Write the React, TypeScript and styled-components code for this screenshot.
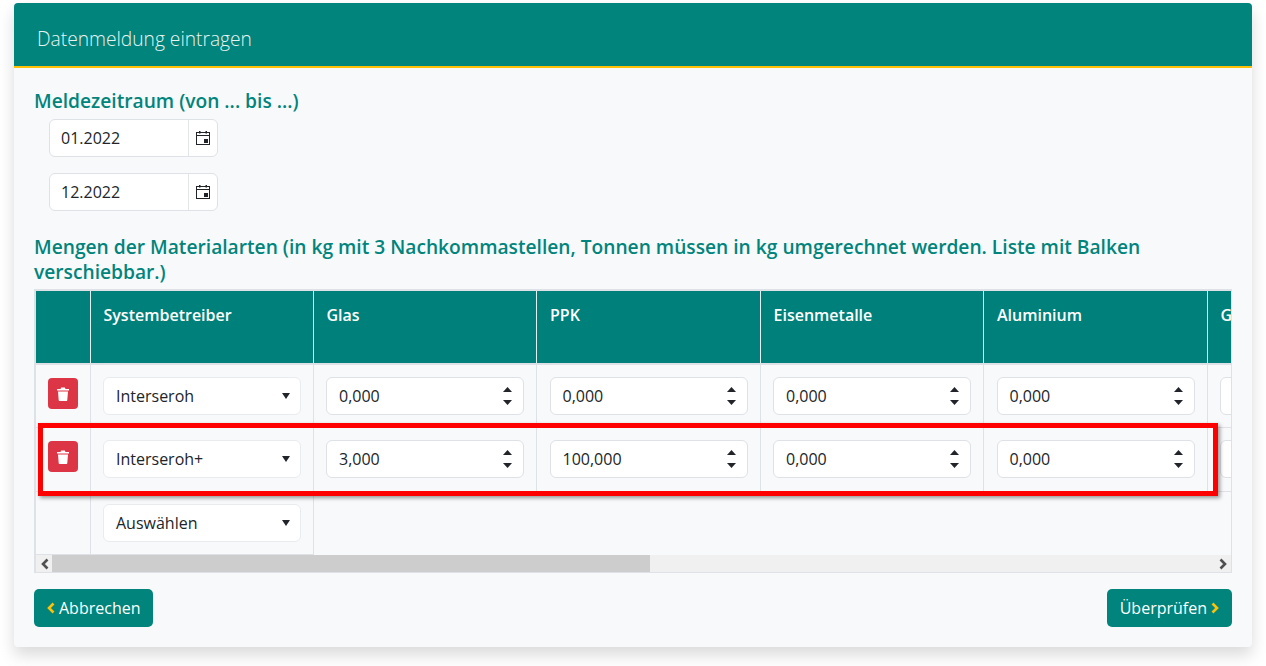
import styled, { createGlobalStyle } from "styled-components";

const columns = ["Glas", "PPK", "Eisenmetalle", "Aluminium", "Getränkekarton"];

const rows = [
  { betreiber: "Interseroh", values: ["0,000", "0,000", "0,000", "0,000", "0,000"] },
  { betreiber: "Interseroh+", values: ["3,000", "100,000", "0,000", "0,000", "0,000"] },
];

const CalendarIcon = () => (
  <svg width="16" height="16" viewBox="0 0 16 16" fill="none">
    <rect x="1.5" y="2.5" width="13" height="12" stroke="#212529" />
    <path d="M1.5 5.5h13" stroke="#212529" />
    <rect x="4" y="1" width="1.5" height="2.5" fill="#212529" />
    <rect x="10.5" y="1" width="1.5" height="2.5" fill="#212529" />
    <rect x="9" y="9" width="4" height="4" fill="#212529" />
  </svg>
);

const TrashIcon = () => (
  <svg width="12" height="14" viewBox="0 0 12 14" fill="#fff">
    <path d="M0 2h3.5L4.2.5h3.6L8.5 2H12v1.5H0z" />
    <path d="M1 4.5h10l-.7 8.5c0 .6-.5 1-1 1H2.7c-.5 0-1-.4-1-1z" />
  </svg>
);

const Chevron = ({ dir, color }: { dir: "left" | "right"; color: string }) => (
  <svg width="8" height="12" viewBox="0 0 8 12" fill="none">
    <path
      d={dir === "left" ? "M6.5 1.5L2 6l4.5 4.5" : "M1.5 1.5L6 6l-4.5 4.5"}
      stroke={color}
      strokeWidth="2.6"
    />
  </svg>
);

const Arrow = ({ up }: { up?: boolean }) => (
  <svg width="9" height="5" viewBox="0 0 9 5" fill="#212529">
    <path d={up ? "M4.5 0L9 5H0z" : "M0 0H9L4.5 5z"} />
  </svg>
);

const SelectField = ({ label }: { label: string }) => (
  <Select>
    <span>{label}</span>
    <Caret />
  </Select>
);

const NumberField = ({ value }: { value: string }) => (
  <NumberBox>
    <span>{value}</span>
    <Spinner>
      <Arrow up />
      <Arrow />
    </Spinner>
  </NumberBox>
);

const DateField = ({ value }: { value: string }) => (
  <DateBox>
    <DateValue>{value}</DateValue>
    <DateAddon>
      <CalendarIcon />
    </DateAddon>
  </DateBox>
);

export default function App() {
  return (
    <>
      <GlobalStyle />
      <Card>
        <CardHeader>Datenmeldung eintragen</CardHeader>
        <CardBody>
          <Heading>Meldezeitraum (von ... bis ...)</Heading>
          <DateList>
            <DateField value="01.2022" />
            <DateField value="12.2022" />
          </DateList>
          <TableHeading>
            Mengen der Materialarten (in kg mit 3 Nachkommastellen, Tonnen müssen in kg umgerechnet
            werden. Liste mit Balken verschiebbar.)
          </TableHeading>
          <TableFrame>
            <TableScroll>
              <Table>
                <thead>
                  <tr>
                    <HeadCell $width={54} />
                    <HeadCell $width={223}>Systembetreiber</HeadCell>
                    {columns.map((c) => (
                      <HeadCell key={c} $width={223.5}>
                        {c}
                      </HeadCell>
                    ))}
                  </tr>
                </thead>
                <tbody>
                  {rows.map((row) => (
                    <tr key={row.betreiber}>
                      <DeleteCell>
                        <DeleteButton>
                          <TrashIcon />
                        </DeleteButton>
                      </DeleteCell>
                      <Cell>
                        <SelectField label={row.betreiber} />
                      </Cell>
                      {row.values.map((v, i) => (
                        <Cell key={i}>
                          <NumberField value={v} />
                        </Cell>
                      ))}
                    </tr>
                  ))}
                  <tr>
                    <DeleteCell />
                    <Cell>
                      <SelectField label="Auswählen" />
                    </Cell>
                  </tr>
                </tbody>
              </Table>
            </TableScroll>
            <Scrollbar>
              <ScrollArrow>
                <Chevron dir="left" color="#505050" />
              </ScrollArrow>
              <ScrollTrack>
                <ScrollThumb />
              </ScrollTrack>
              <ScrollArrow>
                <Chevron dir="right" color="#505050" />
              </ScrollArrow>
            </Scrollbar>
            <Highlight />
          </TableFrame>
          <Actions>
            <ActionButton $end={12}>
              <Chevron dir="left" color="#ffc107" />
              Abbrechen
            </ActionButton>
            <ActionButton $end={13}>
              Überprüfen
              <Chevron dir="right" color="#ffc107" />
            </ActionButton>
          </Actions>
        </CardBody>
      </Card>
    </>
  );
}

const GlobalStyle = createGlobalStyle`
  html, body {
    margin: 0;
    padding: 0;
    height: 666px;
    background: #fff;
    overflow: hidden;
  }
  body {
    font-family: "Open Sans", "Noto Sans", sans-serif;
    font-size: 16px;
    line-height: 24px;
    color: #212529;
  }
  #root {
    height: 666px;
    padding-top: 3px;
    box-sizing: border-box;
  }
`;

const Card = styled.div`
  box-sizing: border-box;
  width: 1238px;
  height: 644px;
  margin-left: 14px;
  border-radius: 4px;
  overflow: hidden;
  background: #f8f9fa;
  box-shadow: 0 8px 16px rgba(0, 0, 0, 0.15);
`;

const CardHeader = styled.div`
  box-sizing: border-box;
  height: 65px;
  padding: 22px 0 0 23px;
  background: #00847c;
  border-bottom: 2px solid #ffc107;
  color: #e8f3f2;
  font-size: 19.2px;
  font-weight: 300;
  line-height: 27px;
`;

const CardBody = styled.div`
  padding: 20px 20px 0 20px;
`;

const Heading = styled.h5`
  margin: 0;
  color: #00847c;
  font-size: 19.2px;
  font-weight: 600;
  line-height: 25px;
`;

const DateList = styled.div`
  display: flex;
  flex-direction: column;
  gap: 16px;
  margin: 6px 0 0 15px;
`;

const DateBox = styled.div`
  box-sizing: border-box;
  display: flex;
  width: 169px;
  height: 38px;
  background: #fff;
  border: 1px solid #dee2e6;
  border-radius: 6px;
`;

const DateValue = styled.div`
  flex: 1;
  padding: 6px 11px;
`;

const DateAddon = styled.div`
  display: flex;
  align-items: center;
  justify-content: center;
  width: 28px;
  border-left: 1px solid #e3e6e9;
`;

const TableHeading = styled(Heading)`
  margin-top: 23px;
`;

const TableFrame = styled.div`
  position: relative;
  box-sizing: border-box;
  width: 1198px;
  margin-top: 5px;
  border: 1px solid #dee2e6;
  border-top-width: 2px;
  border-left-width: 2px;
`;

const TableScroll = styled.div`
  overflow: hidden;
  height: 264px;
`;

const Table = styled.table`
  table-layout: fixed;
  width: 1394.5px;
  border-collapse: collapse;
`;

const HeadCell = styled.th<{ $width?: number }>`
  box-sizing: border-box;
  width: ${(p) => p.$width}px;
  height: 73px;
  padding: 12px 13px;
  vertical-align: top;
  text-align: left;
  background: #00807a;
  border-right: 1px solid #e4eeee;
  border-bottom: 2px solid #dee2e6;
  color: #fff;
  font-size: 16px;
  font-weight: 600;
`;

const Cell = styled.td`
  box-sizing: border-box;
  height: 63.5px;
  padding: 0 12px 0 12.5px;
  vertical-align: middle;
  border-right: 1px solid #dee2e6;
  border-bottom: 1px solid #dee2e6;
`;

const DeleteCell = styled(Cell)`
  padding: 0;
  vertical-align: top;
`;

const DeleteButton = styled.button`
  display: flex;
  align-items: center;
  justify-content: center;
  width: 30px;
  height: 31px;
  margin: 13px 0 0 12px;
  padding: 0;
  border: none;
  border-radius: 4px;
  background: #dc3545;
`;

const Select = styled.div`
  box-sizing: border-box;
  display: flex;
  align-items: center;
  justify-content: space-between;
  height: 38px;
  padding: 0 10px 0 12px;
  background: #fff;
  border: 1px solid #e9ecef;
  border-radius: 6px;
`;

const Caret = styled.i`
  width: 0;
  height: 0;
  border-left: 4px solid transparent;
  border-right: 4px solid transparent;
  border-top: 6px solid #212529;
`;

const NumberBox = styled(Select)`
  border-color: #dee2e6;
  padding-right: 11px;
`;

const Spinner = styled.div`
  display: flex;
  flex-direction: column;
  gap: 8px;

  svg {
    display: block;
  }
`;

const Scrollbar = styled.div`
  display: flex;
  height: 17px;
  background: #f0f0f0;
`;

const ScrollArrow = styled.div`
  display: flex;
  align-items: center;
  justify-content: center;
  flex: 0 0 17px;
`;

const ScrollTrack = styled.div`
  flex: 1;
`;

const ScrollThumb = styled.div`
  width: 598px;
  height: 100%;
  margin-left: -1px;
  background: #cdcdcd;
`;

const Highlight = styled.div`
  position: absolute;
  left: 2px;
  top: 132px;
  box-sizing: border-box;
  width: 1180px;
  height: 73px;
  border: 5px solid #f00;
  box-shadow: 2px 2px 4px rgba(0, 0, 0, 0.4);
  pointer-events: none;
`;

const Actions = styled.div`
  display: flex;
  justify-content: space-between;
  margin-top: 16px;
`;

const ActionButton = styled.button<{ $end: number }>`
  display: flex;
  align-items: center;
  gap: 4px;
  height: 38px;
  padding: 0 ${(p) => p.$end}px 0 13px;
  border: none;
  border-radius: 5px;
  background: #00847c;
  color: #fff;
  font-family: inherit;
  font-size: 16px;
`;
